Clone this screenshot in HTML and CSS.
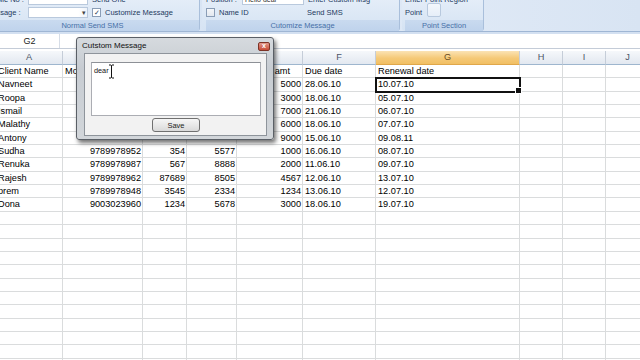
FILE: index.html
```html
<!DOCTYPE html>
<html lang="en">
<head>
    <meta charset="UTF-8">
    <meta name="viewport" content="width=device-width, initial-scale=1.0">
    <title>SMS Sheet - Custom Message</title>
    <link rel="stylesheet" href="styles.css">
</head>
<body>
    <!-- ribbon (only the lower part is visible) -->
    <div class="ribbon">
        <div class="group g1">
            <div class="grow">
                <span class="rtext w42">Mobile No :</span>
                <span class="field w60"></span>
                <span class="rtext">Send One</span>
            </div>
            <div class="grow">
                <span class="rtext w42">Message :</span>
                <span class="field combo w60"><span class="arrow">&#9662;</span></span>
                <span class="check">&#10003;</span>
                <span class="rtext">Customize Message</span>
            </div>
            <div class="glabel">Normal Send SMS</div>
        </div>
        <div class="group g2">
            <div class="grow">
                <span class="rtext w36">Position :</span>
                <span class="field w62">Hello dear</span>
                <span class="rtext">Enter Custom Msg</span>
            </div>
            <div class="grow">
                <span class="check off"></span>
                <span class="rtext w88">Name ID</span>
                <span class="rtext">Send SMS</span>
            </div>
            <div class="glabel">Cutomize Message</div>
        </div>
        <div class="group g3">
            <div class="grow">
                <span class="rtext">Enter Point Region</span>
            </div>
            <div class="grow">
                <span class="rtext w22">Point</span>
                <span class="point-box"></span>
            </div>
            <div class="glabel">Point Section</div>
        </div>
    </div>

    <div class="formula-bar">
        <div class="name-box">G2</div>
        <div class="formula"></div>
    </div>

    <div class="sheet">
        <div class="row head">
            <span>A</span><span>B</span><span>C</span><span>D</span><span>E</span>
            <span>F</span><span class="active">G</span><span>H</span><span>I</span><span>J</span>
        </div>
        <div class="row">
            <span>Client Name</span><span>Mobile No</span><span></span><span></span><span>Balance amt</span>
            <span>Due date</span><span>Renewal date</span><span></span><span></span><span></span>
        </div>
        <div class="row">
            <span>Navneet</span><span></span><span></span><span></span><span class="num">5000</span>
            <span>28.06.10</span><span class="sel">10.07.10</span><span></span><span></span><span></span>
        </div>
        <div class="row">
            <span>Roopa</span><span></span><span></span><span></span><span class="num">3000</span>
            <span>18.06.10</span><span>05.07.10</span><span></span><span></span><span></span>
        </div>
        <div class="row">
            <span>Ismail</span><span></span><span></span><span></span><span class="num">7000</span>
            <span>21.06.10</span><span>06.07.10</span><span></span><span></span><span></span>
        </div>
        <div class="row">
            <span>Malathy</span><span></span><span></span><span></span><span class="num">6000</span>
            <span>18.06.10</span><span>07.07.10</span><span></span><span></span><span></span>
        </div>
        <div class="row">
            <span>Antony</span><span></span><span></span><span></span><span class="num">9000</span>
            <span>15.06.10</span><span>09.08.11</span><span></span><span></span><span></span>
        </div>
        <div class="row">
            <span>Sudha</span><span class="num">9789978952</span><span class="num">354</span><span class="num">5577</span><span class="num">1000</span>
            <span>16.06.10</span><span>08.07.10</span><span></span><span></span><span></span>
        </div>
        <div class="row">
            <span>Renuka</span><span class="num">9789978987</span><span class="num">567</span><span class="num">8888</span><span class="num">2000</span>
            <span>11.06.10</span><span>09.07.10</span><span></span><span></span><span></span>
        </div>
        <div class="row">
            <span>Rajesh</span><span class="num">9789978962</span><span class="num">87689</span><span class="num">8505</span><span class="num">4567</span>
            <span>12.06.10</span><span>13.07.10</span><span></span><span></span><span></span>
        </div>
        <div class="row">
            <span>prem</span><span class="num">9789978948</span><span class="num">3545</span><span class="num">2334</span><span class="num">1234</span>
            <span>13.06.10</span><span>12.07.10</span><span></span><span></span><span></span>
        </div>
        <div class="row">
            <span>Dona</span><span class="num">9003023960</span><span class="num">1234</span><span class="num">5678</span><span class="num">3000</span>
            <span>18.06.10</span><span>19.07.10</span><span></span><span></span><span></span>
        </div>
        <!-- empty rows below the data -->
        <div class="row filler">
            <span></span><span></span><span></span><span></span><span></span>
            <span></span><span></span><span></span><span></span><span></span>
        </div>
    </div>

    <!-- custom message dialog -->
    <div class="dialog">
        <div class="titlebar">
            <span class="title">Cutstom Message</span>
            <span class="close">x</span>
        </div>
        <div class="panel">
            <div class="msgbox">dear <span class="caret"></span></div>
            <button class="save">Save</button>
        </div>
        <svg class="ibeam" width="7" height="15" viewBox="0 0 7 15">
            <path d="M1 1h2l.5 .5.5-.5h2M3.5 1.5v12M1 14h2l.5-.5.5.5h2" fill="none" stroke="#fff" stroke-width="2.2"/>
            <path d="M1 1h2l.5 .5.5-.5h2M3.5 1.5v12M1 14h2l.5-.5.5.5h2" fill="none" stroke="#111" stroke-width="1"/>
        </svg>
    </div>
</body>
</html>
```

FILE: styles.css
```css
* {
    box-sizing: border-box;
}
body {
    margin: 0;
    width: 640px;
    height: 360px;
    overflow: hidden;
    background-color: #fff;
    font-family: 'Liberation Sans', Arial, sans-serif;
    position: relative;
}

/* ribbon */
.ribbon {
    height: 32px;
    display: flex;
    align-items: flex-end;
    gap: 2px;
    overflow: hidden;
    background: linear-gradient(to right, #d3e1f2, #dfe9f6 70%, #d8e4f3);
    border-bottom: 1px solid #9fb6d4;
}
.group {
    display: flex;
    flex-direction: column;
    flex-shrink: 0;
    background: linear-gradient(#e4edf8, #d5e3f3);
    border-right: 1px solid #a9bfdb;
    border-radius: 0 0 3px 3px;
}
.g1 {
    width: 214px;
    margin-left: -14px;
}
.g2 {
    width: 198px;
    padding-left: 4px;
}
.g3 {
    width: 82px;
    padding-left: 3px;
}
.grow {
    height: 13px;
    display: flex;
    align-items: center;
    gap: 4px;
    white-space: nowrap;
}
.grow:first-child {
    margin-top: -6px;
}
.rtext {
    font-size: 7.5px;
    color: #1e3a5f;
    flex-shrink: 0;
}
.w22 { width: 18px; }
.w36 { width: 32px; }
.w42 { width: 38px; }
.w88 { width: 84px; }
.field {
    height: 11px;
    background-color: #fff;
    border: 1px solid #b9c9dd;
    font-size: 7px;
    color: #333;
    padding-left: 2px;
    line-height: 9px;
    overflow: hidden;
    flex-shrink: 0;
}
.w60 { width: 60px; }
.w62 { width: 62px; }
.combo {
    position: relative;
    background: linear-gradient(to right, #fff 85%, #eef3fa);
}
.arrow {
    position: absolute;
    right: 1px;
    top: 0;
    font-size: 7px;
    color: #444;
}
.check {
    width: 9px;
    height: 9px;
    border: 1px solid #8a9db6;
    background-color: #fff;
    font-size: 7px;
    line-height: 7px;
    text-align: center;
    color: #2a3b55;
    flex-shrink: 0;
}
.check.off {
    background: linear-gradient(#f4f6f9, #e3e8ef);
}
.point-box {
    width: 14px;
    height: 14px;
    margin-top: -6px;
    background: linear-gradient(#f3f7fc, #e6eef8);
    border: 1px solid #b8c9de;
    border-radius: 2px;
}
.glabel {
    height: 11px;
    margin-top: 1px;
    background: linear-gradient(#c9daef, #bfd3ec);
    color: #4670a8;
    font-size: 7.5px;
    line-height: 11px;
    text-align: center;
}

/* formula bar */
.formula-bar {
    height: 17px;
    display: flex;
    border-top: 2px solid #d3e0f1;
    border-bottom: 1px solid #c4ccd8;
}
.name-box {
    width: 60px;
    font-size: 9px;
    line-height: 14px;
    text-align: center;
    color: #222;
    border-right: 1px solid #d6dde7;
}
.formula {
    flex: 1;
}

/* sheet */
.sheet {
    margin-top: 2px;
    margin-left: -4px;
    font-size: 9.2px;
    color: #000;
}
.row {
    display: grid;
    grid-template-columns: 67px 80px 44px 50px 66px 73px 144px 43px 43px 44px;
    height: 13.33px;
}
.row span {
    border-right: 1px solid #dadcdd;
    border-bottom: 1px solid #dadcdd;
    padding: 0 2px;
    line-height: 12.5px;
    white-space: nowrap;
    overflow: hidden;
}
.row span.num {
    text-align: right;
    padding-right: 1px;
}
.row.head {
    height: 14px;
}
.row.head span {
    background: linear-gradient(#f6f8fb, #e2e8f0);
    border-right: 1px solid #c5cdd8;
    border-bottom: 1px solid #9eb6ce;
    text-align: center;
    color: #4c5566;
    line-height: 13px;
}
.row.head span.active {
    background: linear-gradient(#fbe3b4, #f5c978 55%, #f1bf63);
    border-bottom-color: #e0a74a;
    color: #6b4c1e;
}
.row span.sel {
    position: relative;
    overflow: visible;
    outline: 2px solid #111;
    outline-offset: -1px;
}
.row span.sel::after {
    content: "";
    position: absolute;
    right: -3px;
    bottom: -3px;
    width: 5px;
    height: 5px;
    background-color: #111;
    border: 1px solid #fff;
}
.row.filler {
    height: 160px;
}
.row.filler span {
    border-bottom: none;
    background: repeating-linear-gradient(to bottom, transparent 0, transparent 12.33px, #dadcdd 12.33px, #dadcdd 13.33px);
}

/* dialog */
.dialog {
    position: absolute;
    left: 76px;
    top: 37px;
    width: 198px;
    height: 103px;
    padding: 0 6px 4px 7px;
    border: 1px solid #5a5f66;
    border-radius: 3px;
    background: linear-gradient(#d6dade, #c7ccd2 30%, #d2d6da);
    box-shadow: 2px 3px 4px rgba(0, 0, 0, 0.55);
}
.titlebar {
    height: 15px;
    display: flex;
    align-items: center;
    justify-content: space-between;
}
.title {
    font-size: 8px;
    color: #111;
    margin-left: -2px;
}
.close {
    width: 12px;
    height: 9px;
    margin-right: -3px;
    margin-top: 1px;
    background: linear-gradient(#e29a8c, #c74a35);
    border: 1px solid #7d3326;
    border-radius: 2px;
    color: #fff;
    font-size: 7px;
    font-weight: bold;
    line-height: 6px;
    text-align: center;
}
.panel {
    height: 83px;
    padding: 8px 5px 0 6px;
    background-color: #f2f2f2;
    border: 1px solid #8e949b;
    display: flex;
    flex-direction: column;
    align-items: center;
}
.msgbox {
    width: 100%;
    height: 54px;
    background-color: #fff;
    border: 1px solid #abadb3;
    border-top-color: #8d9096;
    font-size: 7.3px;
    padding: 3px 2px;
    color: #111;
}
.caret {
    display: inline-block;
    width: 1px;
    height: 8px;
    vertical-align: -2px;
    background-color: #111;
}
.save {
    margin-top: 2px;
    width: 48px;
    height: 14px;
    padding: 0;
    font-family: 'Liberation Sans', Arial, sans-serif;
    font-size: 7.5px;
    color: #222;
    background: linear-gradient(#f6f6f6, #e8e8e8 50%, #d9d9d9);
    border: 1px solid #707070;
    border-radius: 3px;
}
.ibeam {
    position: absolute;
    left: 31px;
    top: 26px;
}
```
